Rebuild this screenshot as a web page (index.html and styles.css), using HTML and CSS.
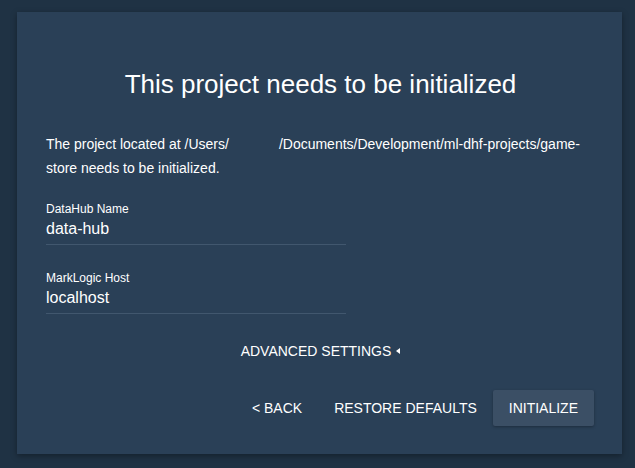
FILE: index.html
```html
<!DOCTYPE html>
<html>
<head>
<meta charset="utf-8">
<link rel="stylesheet" href="styles.css">
</head>
<body>
<div class="card">
  <h1 class="title">This project needs to be initialized</h1>
  <p class="desc">The project located at <span class="path-user">/Users/</span>/Documents/Development/ml-dhf-projects/game-store needs to be initialized.</p>
  <div class="field">
    <label class="field-label">DataHub Name</label>
    <div class="field-value">data-hub</div>
  </div>
  <div class="field field-second">
    <label class="field-label">MarkLogic Host</label>
    <div class="field-value">localhost</div>
  </div>
  <div class="advanced">ADVANCED SETTINGS<span class="caret"></span></div>
  <div class="actions">
    <button class="btn">&lt; BACK</button>
    <button class="btn">RESTORE DEFAULTS</button>
    <button class="btn btn-raised">INITIALIZE</button>
  </div>
</div>
</body>
</html>
```

FILE: styles.css
```css
html, body {
  margin: 0;
  padding: 0;
  background: #1f3244;
  width: 635px;
  height: 468px;
  overflow: hidden;
}
body {
  font-family: "Liberation Sans", Arial, sans-serif;
  color: #ffffff;
}
.card {
  box-sizing: border-box;
  margin: 12px 0 0 17px;
  width: 605px;
  height: 442px;
  background: #2a4057;
  padding: 56px 28px 28px 29px;
  box-shadow: 0 2px 6px rgba(0, 0, 0, 0.35);
  display: flex;
  flex-direction: column;
}
.title {
  margin: 0;
  font-size: 26px;
  line-height: 32px;
  font-weight: normal;
  text-align: center;
  padding-left: 1px;
}
.desc {
  margin: 32px 0 0 0;
  font-size: 14px;
  line-height: 24px;
}
.path-user {
  margin-right: 50px;
}
.field {
  margin-top: 22px;
  width: 300px;
  border-bottom: 1px solid #41576e;
  padding-bottom: 5px;
}
.field-second {
  margin-top: 26px;
}
.field-label {
  display: block;
  font-size: 12px;
  line-height: 14px;
}
.field-value {
  margin-top: 3px;
  font-size: 16px;
  line-height: 20px;
}
.advanced {
  margin-top: 27px;
  font-size: 14px;
  line-height: 20px;
  display: flex;
  justify-content: center;
  align-items: center;
  padding-left: 1px;
}
.caret {
  display: inline-block;
  width: 0;
  height: 0;
  margin-left: 5px;
  border-right: 4px solid #ffffff;
  border-top: 3.5px solid transparent;
  border-bottom: 3.5px solid transparent;
  margin-top: -1px;
}
.actions {
  margin-top: 29px;
  display: flex;
  justify-content: flex-end;
}
.btn {
  font-family: "Liberation Sans", Arial, sans-serif;
  font-size: 14px;
  line-height: 36px;
  height: 36px;
  padding: 0 16px;
  border: none;
  border-radius: 2px;
  background: transparent;
  color: #ffffff;
  cursor: pointer;
}
.btn-raised {
  background: #3b4f65;
  box-shadow: 0 1px 3px rgba(0, 0, 0, 0.3);
}
```
